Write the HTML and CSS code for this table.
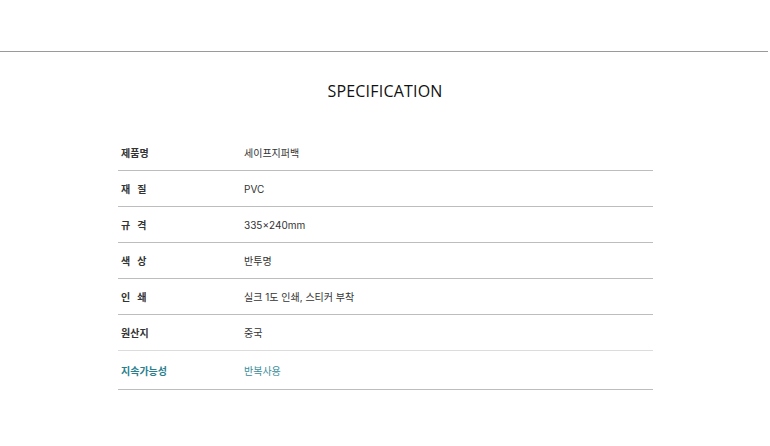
FILE: index.html
```html
<!DOCTYPE html>
<html lang="ko">
<head>
<meta charset="utf-8">
<link rel="stylesheet" href="styles.css">
</head>
<body>
<div class="topbar"></div>
<section class="spec">
  <h2 class="title">SPECIFICATION</h2>
  <div class="table">
    <div class="row"><div class="label">제품명</div><div class="value">세이프지퍼백</div></div>
    <div class="row"><div class="label">재<span class="gap"></span>질</div><div class="value">PVC</div></div>
    <div class="row"><div class="label">규<span class="gap"></span>격</div><div class="value">335×240mm</div></div>
    <div class="row"><div class="label">색<span class="gap"></span>상</div><div class="value">반투명</div></div>
    <div class="row"><div class="label">인<span class="gap"></span>쇄</div><div class="value">실크 1도 인쇄, 스티커 부착</div></div>
    <div class="row row-light"><div class="label">원산지</div><div class="value">중국</div></div>
    <div class="row teal"><div class="label">지속가능성</div><div class="value">반복사용</div></div>
  </div>
</section>
</body>
</html>
```
FILE: styles.css
```css
html, body {
  margin: 0;
  padding: 0;
  background: #fff;
  font-family: "Inter", "Noto Sans CJK KR", "Noto Sans", sans-serif;
}
.topbar {
  height: 51px;
  border-bottom: 1px solid #9a9a9a;
  margin-right: 2px;
}
.spec {
  display: flex;
  flex-direction: column;
  align-items: center;
}
.title {
  margin: 28px 0 0;
  font-family: "Open Sans", "Noto Sans", sans-serif;
  font-weight: 400;
  font-size: 16px;
  letter-spacing: 0.2px;
  color: #111;
  line-height: 22px;
}
.table {
  width: 535px;
  margin-top: 33px;
  margin-left: 1px;
}
.row {
  display: flex;
  align-items: center;
  height: 35px;
  border-bottom: 1px solid #bdbdbd;
  font-size: 10px;
  color: #333;
}
.row-light {
  border-bottom-color: #dcdcdc;
}
.row.teal {
  height: 38px;
  color: #2a7f8e;
}
.label {
  width: 123px;
  padding-left: 3px;
  font-weight: 700;
  display: flex;
  align-items: center;
}
.gap {
  display: inline-block;
  width: 7px;
}
.value {
  font-weight: 400;
}
.teal .value { color: #3a8c9a; }
```
